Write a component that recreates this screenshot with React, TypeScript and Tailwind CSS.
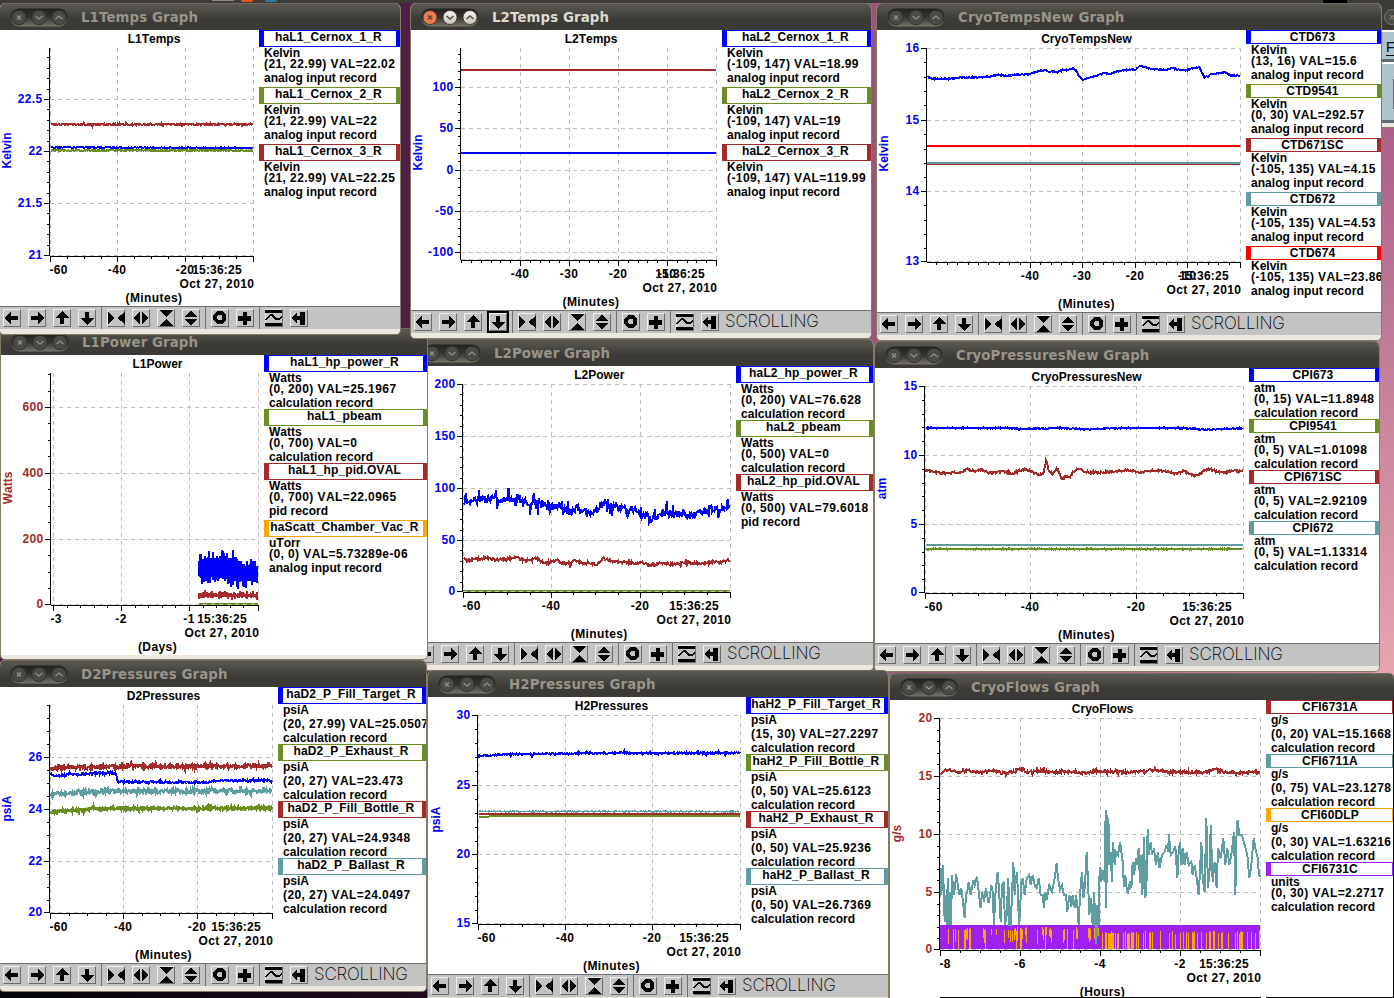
import type { ReactNode } from 'react'
import clsx from 'clsx'

const BLUE = '#0000ff'
const OLIVE = '#6b8e23'
const BROWN = '#a52a2a'
const CADET = '#5f9ea0'
const ORANGE = '#ffa500'
const PURPLE = '#a020f0'
const RED = '#ff0000'

type Point = [number, number]

type Trace = {
  color: string
  points: Point[]
  noise?: number
  spikes?: number
  width?: number
}

type Band = { color: string; x1: number; x2: number; top: Point[]; bottom: Point[]; jitter: number }

type Tick = { at: number; label?: string }

type Graph = {
  name: string
  active?: boolean
  left: number
  top: number
  width: number
  bodyHeight: number
  toolbar?: boolean
  status?: boolean
  // plot rectangle, screen coordinates
  plot: { x1: number; x2: number; y1: number; y2: number }
  xTicks: Tick[]
  yTicks: Tick[]
  xStep: number
  yStep: number
  yLabelRight: number
  axisColor: string
  yTitle: string
  yTitleAt: Point
  xTitle: string
  center: number
  traces: Trace[]
  bands?: Band[]
  flowBars?: boolean
  legendLeft: number
  legend: { color: string; name: string; units: string; value: string; record: string }[]
}

function random(seed: number) {
  let s = seed
  return () => {
    s = (s * 1103515245 + 12345) % 2147483648
    return s / 2147483648
  }
}

function interpolate(points: Point[], x: number) {
  for (let i = 1; i < points.length; i++) {
    if (x <= points[i][0]) {
      const [ax, ay] = points[i - 1]
      const [bx, by] = points[i]
      return ay + ((by - ay) * (x - ax)) / (bx - ax)
    }
  }
  return points[points.length - 1][1]
}

function tracePath(trace: Trace) {
  const { points, noise = 0, spikes = 0 } = trace
  if (!noise) return points.map((p) => p.join(',')).join(' ')
  const rand = random(Math.round(points[0][1] * 31 + points.length))
  const out: string[] = []
  for (let x = points[0][0]; x <= points[points.length - 1][0]; x += 0.7) {
    let y = interpolate(points, x) + (rand() - 0.5) * 2 * noise
    if (rand() < 0.12) y += (rand() - 0.5) * 2 * spikes
    out.push(`${x.toFixed(1)},${y.toFixed(1)}`)
  }
  return out.join(' ')
}

function bandPath(band: Band) {
  const rand = random(Math.round(band.x1 + band.top[0][1]))
  const out: string[] = []
  for (let x = band.x1; x <= band.x2; x += 1) {
    out.push(`${x},${(interpolate(band.top, x) - rand() * rand() * band.jitter).toFixed(1)}`)
    out.push(`${x},${(interpolate(band.bottom, x) + rand() * rand() * band.jitter).toFixed(1)}`)
  }
  return out.join(' ')
}

// points digitised at triple size, moved to screen coordinates
function digitised(ox: number, oy: number, k: number, flat: number[]): Point[] {
  const out: Point[] = []
  for (let i = 0; i < flat.length; i += 2) out.push([ox + flat[i] / k, oy + flat[i + 1] / 3])
  return out
}

const line = (x1: number, x2: number, y: number): Point[] => [[x1, y], [x2, y]]

const cernox = (prefix: string, units: string, rows: string[]) =>
  rows.map((value, i) => ({
    color: [BLUE, OLIVE, BROWN][i],
    name: `${prefix}_Cernox_${i + 1}_R`,
    units,
    value,
    record: 'analog input record',
  }))

const calc = 'calculation record'
const analog = 'analog input record'

const L1Temps: Graph = {
  name: 'L1Temps', left: -1, top: 3, width: 402, bodyHeight: 276, toolbar: true,
  plot: { x1: 50, x2: 253, y1: 48, y2: 256 },
  xTicks: [{ at: 50, label: '-60' }, { at: 117, label: '-40' }, { at: 185, label: '-20' }, { at: 253 }],
  yTicks: [{ at: 99, label: '22.5' }, { at: 151, label: '22' }, { at: 203, label: '21.5' }, { at: 255, label: '21' }],
  xStep: 17, yStep: 10.4, yLabelRight: 42.5, axisColor: BLUE, yTitle: 'Kelvin', yTitleAt: [11, 150.5],
  xTitle: '(Minutes)', center: 154,
  traces: [
    { color: OLIVE, points: line(51, 253, 150.4), noise: 0.6 },
    { color: BLUE, points: [[51, 147.3], [253, 148]], noise: 0.5 },
    { color: BROWN, points: line(51, 253, 124.5), noise: 0.7, spikes: 1.5 },
  ],
  legendLeft: 259,
  legend: cernox('haL1', 'Kelvin', ['(21, 22.99) VAL=22.02', '(21, 22.99) VAL=22', '(21, 22.99) VAL=22.25']),
}

const L2Temps: Graph = {
  name: 'L2Temps', active: true, left: 410, top: 3, width: 462, bodyHeight: 280, toolbar: true, status: true,
  plot: { x1: 461, x2: 716, y1: 48, y2: 260 },
  xTicks: [{ at: 520, label: '-40' }, { at: 569, label: '-30' }, { at: 618, label: '-20' }, { at: 667, label: '-10' }, { at: 716 }],
  yTicks: [{ at: 87, label: '100' }, { at: 128, label: '50' }, { at: 170, label: '0' }, { at: 211, label: '-50' }, { at: 252, label: '-100' }],
  xStep: 9.8, yStep: 8.25, yLabelRight: 453.5, axisColor: BLUE, yTitle: 'Kelvin', yTitleAt: [422, 152.5],
  xTitle: '(Minutes)', center: 591,
  traces: [
    { color: BROWN, points: line(461, 716, 70) },
    { color: BLUE, points: line(461, 716, 153) },
  ],
  legendLeft: 722,
  legend: cernox('haL2', 'Kelvin', ['(-109, 147) VAL=18.99', '(-109, 147) VAL=19', '(-109, 147) VAL=119.99']),
}

const CryoTemps: Graph = {
  name: 'CryoTempsNew', left: 876, top: 3, width: 506, bodyHeight: 282, toolbar: true, status: true,
  plot: { x1: 927, x2: 1240, y1: 48, y2: 262 },
  xTicks: [{ at: 1030, label: '-40' }, { at: 1082, label: '-30' }, { at: 1135, label: '-20' }, { at: 1187, label: '-10' }, { at: 1240 }],
  yTicks: [{ at: 48, label: '16' }, { at: 120, label: '15' }, { at: 191, label: '14' }, { at: 261, label: '13' }],
  xStep: 10.4, yStep: 14.3, yLabelRight: 919.5, axisColor: BLUE, yTitle: 'Kelvin', yTitleAt: [888, 153.5],
  xTitle: '(Minutes)', center: 1086.5,
  traces: [
    {
      color: BLUE, noise: 0.6,
      points: digitised(870, 0, 2.992, [
        172, 231, 190, 236, 210, 237, 240, 236, 270, 233, 300, 232, 350, 231, 385, 224, 410, 228, 425, 225, 450, 223,
        475, 223, 500, 215, 525, 210, 535, 217, 545, 213, 560, 218, 575, 211, 590, 210, 605, 206, 615, 209, 625, 228,
        637, 240, 650, 235, 665, 230, 680, 227, 700, 218, 720, 222, 740, 214, 770, 210, 795, 208, 805, 200, 820, 201,
        840, 206, 860, 209, 885, 210, 905, 205, 930, 211, 950, 210, 965, 205, 985, 201, 992, 215, 1000, 232, 1010, 230,
        1020, 222, 1040, 220, 1060, 217, 1080, 226, 1100, 227, 1108, 228,
      ]),
    },
    { color: RED, points: line(927, 1240, 146) },
    { color: BROWN, points: line(927, 1240, 164), width: 1.5 },
    { color: CADET, points: line(927, 1240, 163) },
  ],
  legendLeft: 1246,
  legend: [
    { color: BLUE, name: 'CTD673', units: 'Kelvin', value: '(13, 16) VAL=15.6', record: analog },
    { color: OLIVE, name: 'CTD9541', units: 'Kelvin', value: '(0, 30) VAL=292.57', record: analog },
    { color: BROWN, name: 'CTD671SC', units: 'Kelvin', value: '(-105, 135) VAL=4.15', record: analog },
    { color: CADET, name: 'CTD672', units: 'Kelvin', value: '(-105, 135) VAL=4.53', record: analog },
    { color: RED, name: 'CTD674', units: 'Kelvin', value: '(-105, 135) VAL=23.86', record: analog },
  ],
}

const L1Power: Graph = {
  name: 'L1Power', left: 0, top: 328, width: 428, bodyHeight: 300,
  plot: { x1: 51, x2: 258, y1: 373, y2: 605 },
  xTicks: [{ at: 53, label: '-3' }, { at: 121, label: '-2' }, { at: 189, label: '-1' }, { at: 258 }],
  yTicks: [{ at: 407, label: '600' }, { at: 473, label: '400' }, { at: 539, label: '200' }, { at: 604, label: '0' }],
  xStep: 13.6, yStep: 16.45, yLabelRight: 43.5, axisColor: BROWN, yTitle: 'Watts', yTitleAt: [12, 488],
  xTitle: '(Days)', center: 157.5,
  traces: [{ color: OLIVE, points: line(199, 258, 604), width: 3 }],
  bands: [
    {
      color: BLUE, x1: 199, x2: 257.5, jitter: 12,
      top: [[199, 563], [202, 560], [236, 560], [241, 567], [258, 567]],
      bottom: [[199, 576], [234, 577], [240, 581], [258, 580]],
    },
    { color: BROWN, x1: 199, x2: 257.5, jitter: 4, top: line(199, 258, 594), bottom: line(199, 258, 596.5) },
  ],
  legendLeft: 264,
  legend: [
    { color: BLUE, name: 'haL1_hp_power_R', units: 'Watts', value: '(0, 200) VAL=25.1967', record: calc },
    { color: OLIVE, name: 'haL1_pbeam', units: 'Watts', value: '(0, 700) VAL=0', record: calc },
    { color: BROWN, name: 'haL1_hp_pid.OVAL', units: 'Watts', value: '(0, 700) VAL=22.0965', record: 'pid record' },
    { color: ORANGE, name: 'haScatt_Chamber_Vac_R', units: 'uTorr', value: '(0, 0) VAL=5.73289e-06', record: analog },
  ],
}

const L2Power: Graph = {
  name: 'L2Power', left: 412, top: 339, width: 462, bodyHeight: 276, toolbar: true, status: true,
  plot: { x1: 463, x2: 730, y1: 384, y2: 592 },
  xTicks: [{ at: 463, label: '-60' }, { at: 551, label: '-40' }, { at: 640, label: '-20' }, { at: 730 }],
  yTicks: [{ at: 384, label: '200' }, { at: 436, label: '150' }, { at: 488, label: '100' }, { at: 540, label: '50' }, { at: 591, label: '0' }],
  xStep: 22.2, yStep: 10.4, yLabelRight: 455.5, axisColor: BLUE, yTitle: 'Watts', yTitleAt: [424, 488],
  xTitle: '(Minutes)', center: 599.3,
  traces: [
    { color: OLIVE, points: line(463, 730, 591), width: 2 },
    {
      color: BLUE, noise: 3.4, spikes: 13,
      points: digitised(420, 335, 3, [
        131, 500, 150, 500, 165, 495, 190, 495, 210, 492, 225, 488, 250, 498, 265, 497, 290, 490, 310, 500, 330, 508,
        350, 498, 365, 505, 385, 522, 400, 517, 430, 515, 445, 535, 460, 528, 470, 515, 485, 530, 510, 535, 530, 525,
        550, 505, 570, 508, 590, 520, 620, 520, 650, 527, 665, 545, 680, 540, 692, 562, 705, 545, 730, 535, 760, 540,
        790, 538, 820, 540, 850, 530, 870, 522, 900, 522, 930, 515,
      ]),
    },
    {
      color: BROWN, noise: 1.3, spikes: 2.5,
      points: digitised(420, 335, 3, [
        131, 672, 150, 675, 200, 668, 230, 675, 290, 668, 320, 680, 350, 670, 375, 685, 410, 675, 440, 688, 465, 677,
        490, 685, 530, 688, 550, 670, 570, 676, 600, 682, 630, 683, 670, 684, 695, 694, 720, 684, 760, 688, 800, 682,
        850, 686, 880, 680, 905, 682, 930, 673,
      ]),
    },
  ],
  legendLeft: 736,
  legend: [
    { color: BLUE, name: 'haL2_hp_power_R', units: 'Watts', value: '(0, 200) VAL=76.628', record: calc },
    { color: OLIVE, name: 'haL2_pbeam', units: 'Watts', value: '(0, 500) VAL=0', record: calc },
    { color: BROWN, name: 'haL2_hp_pid.OVAL', units: 'Watts', value: '(0, 500) VAL=79.6018', record: 'pid record' },
  ],
}

const CryoPressures: Graph = {
  name: 'CryoPressuresNew', left: 874, top: 341, width: 506, bodyHeight: 275, toolbar: true, status: true,
  plot: { x1: 925, x2: 1243, y1: 386, y2: 593 },
  xTicks: [{ at: 925, label: '-60' }, { at: 1030, label: '-40' }, { at: 1136, label: '-20' }, { at: 1243 }],
  yTicks: [{ at: 386, label: '15' }, { at: 455, label: '10' }, { at: 524, label: '5' }, { at: 592, label: '0' }],
  xStep: 26.5, yStep: 13.8, yLabelRight: 917.5, axisColor: BLUE, yTitle: 'atm', yTitleAt: [886, 488.5],
  xTitle: '(Minutes)', center: 1086.5,
  traces: [
    { color: BLUE, points: [[926, 428], [1010, 428], [1018, 429], [1060, 428], [1085, 429.3], [1120, 428], [1185, 428], [1205, 429.5], [1243, 428.3]], noise: 0.6 },
    {
      color: BROWN, noise: 1.1,
      points: digitised(868, 335, 2.981, [
        172, 405, 200, 411, 230, 415, 270, 412, 295, 403, 320, 409, 340, 405, 370, 416, 400, 408, 430, 416, 465, 402,
        490, 410, 510, 420, 523, 418, 531, 376, 540, 408, 550, 417, 563, 402, 570, 412, 578, 432, 590, 424, 600, 428,
        612, 410, 625, 402, 650, 411, 690, 413, 730, 410, 780, 405, 810, 413, 850, 406, 890, 409, 915, 416, 940, 408,
        975, 424, 1000, 410, 1018, 402, 1055, 414, 1085, 407, 1118, 407,
      ]),
    },
    { color: CADET, points: line(926, 1243, 545) },
    { color: OLIVE, points: line(926, 1243, 549), noise: 0.6 },
  ],
  legendLeft: 1249,
  legend: [
    { color: BLUE, name: 'CPI673', units: 'atm', value: '(0, 15) VAL=11.8948', record: calc },
    { color: OLIVE, name: 'CPI9541', units: 'atm', value: '(0, 5) VAL=1.01098', record: calc },
    { color: BROWN, name: 'CPI671SC', units: 'atm', value: '(0, 5) VAL=2.92109', record: calc },
    { color: CADET, name: 'CPI672', units: 'atm', value: '(0, 5) VAL=1.13314', record: calc },
  ],
}

const D2Pressures: Graph = {
  name: 'D2Pressures', left: -1, top: 660, width: 428, bodyHeight: 276, toolbar: true, status: true,
  plot: { x1: 50, x2: 272, y1: 705, y2: 913 },
  xTicks: [{ at: 50, label: '-60' }, { at: 123, label: '-40' }, { at: 197, label: '-20' }, { at: 272 }],
  yTicks: [{ at: 757, label: '26' }, { at: 809, label: '24' }, { at: 861, label: '22' }, { at: 912, label: '20' }],
  xStep: 18.5, yStep: 12.95, yLabelRight: 42.5, axisColor: BLUE, yTitle: 'psiA', yTitleAt: [11, 808.5],
  xTitle: '(Minutes)', center: 163.5,
  traces: [
    { color: OLIVE, noise: 1.4, spikes: 2.5, width: 2.5, points: digitised(0, 655, 3, [152, 470, 200, 467, 300, 462, 400, 460, 816, 459]) },
    { color: CADET, noise: 2, spikes: 3, width: 2.5, points: digitised(0, 655, 3, [152, 420, 200, 415, 250, 412, 330, 409, 816, 408]) },
    { color: BLUE, noise: 1.1, spikes: 1.5, points: digitised(0, 655, 3, [152, 361, 200, 362, 205, 358, 345, 353, 348, 355, 352, 380, 400, 380, 600, 382, 690, 377, 750, 376, 816, 377]) },
    { color: BROWN, noise: 1.6, spikes: 3, width: 2.5, points: digitised(0, 655, 3, [152, 341, 200, 338, 300, 335, 816, 333]) },
  ],
  legendLeft: 278,
  legend: [
    { color: BLUE, name: 'haD2_P_Fill_Target_R', units: 'psiA', value: '(20, 27.99) VAL=25.0507', record: calc },
    { color: OLIVE, name: 'haD2_P_Exhaust_R', units: 'psiA', value: '(20, 27) VAL=23.473', record: calc },
    { color: BROWN, name: 'haD2_P_Fill_Bottle_R', units: 'psiA', value: '(20, 27) VAL=24.9348', record: calc },
    { color: CADET, name: 'haD2_P_Ballast_R', units: 'psiA', value: '(20, 27) VAL=24.0497', record: calc },
  ],
}

const H2Pressures: Graph = {
  name: 'H2Pressures', left: 427, top: 670, width: 462, bodyHeight: 277, toolbar: true, status: true,
  plot: { x1: 478, x2: 740, y1: 715, y2: 924 },
  xTicks: [{ at: 478, label: '-60' }, { at: 565, label: '-40' }, { at: 652, label: '-20' }, { at: 740 }],
  yTicks: [{ at: 715, label: '30' }, { at: 785, label: '25' }, { at: 854, label: '20' }, { at: 923, label: '15' }],
  xStep: 21.8, yStep: 13.9, yLabelRight: 470.5, axisColor: BLUE, yTitle: 'psiA', yTitleAt: [440, 819.5],
  xTitle: '(Minutes)', center: 611.5,
  traces: [
    { color: BLUE, noise: 0.8, spikes: 2, points: digitised(420, 665, 3, [176, 272, 215, 272, 240, 268, 330, 267, 430, 266, 600, 264, 700, 265, 962, 264]) },
    { color: BROWN, points: line(479, 740, 814), width: 2 },
    { color: OLIVE, points: [[479, 817], [500, 816], [740, 816]], width: 2 },
    { color: CADET, points: line(479, 740, 811.5), noise: 0.6, width: 1.5 },
  ],
  legendLeft: 746,
  legend: [
    { color: BLUE, name: 'haH2_P_Fill_Target_R', units: 'psiA', value: '(15, 30) VAL=27.2297', record: calc },
    { color: OLIVE, name: 'haH2_P_Fill_Bottle_R', units: 'psiA', value: '(0, 50) VAL=25.6123', record: calc },
    { color: BROWN, name: 'haH2_P_Exhaust_R', units: 'psiA', value: '(0, 50) VAL=25.9236', record: calc },
    { color: CADET, name: 'haH2_P_Ballast_R', units: 'psiA', value: '(0, 50) VAL=26.7369', record: calc },
  ],
}

const CryoFlows: Graph = {
  name: 'CryoFlows', left: 889, top: 673, width: 506, bodyHeight: 298,
  plot: { x1: 940, x2: 1260, y1: 718, y2: 950 },
  xTicks: [{ at: 940, label: '-8' }, { at: 1020, label: '-6' }, { at: 1100, label: '-4' }, { at: 1180, label: '-2' }, { at: 1260 }],
  yTicks: [{ at: 718, label: '20' }, { at: 776, label: '15' }, { at: 834, label: '10' }, { at: 892, label: '5' }, { at: 949, label: '0' }],
  xStep: 20, yStep: 11.55, yLabelRight: 932.5, axisColor: BROWN, yTitle: 'g/s', yTitleAt: [901, 833.5],
  xTitle: '(Hours)', center: 1102.5,
  flowBars: true,
  traces: [
    {
      color: BROWN, noise: 1.4, spikes: 3,
      points: digitised(880, 665, 3, [
        182, 325, 205, 312, 230, 322, 255, 316, 300, 323, 345, 318, 370, 325, 400, 320, 420, 312, 440, 320, 480, 318,
        520, 322, 580, 320, 610, 325, 650, 317, 700, 321, 780, 321, 825, 314, 870, 321, 980, 322, 998, 312, 1020, 318,
        1070, 323, 1141, 322,
      ]),
    },
    {
      color: CADET,
      points: digitised(880, 665, 3, [
        182, 610, 184, 690, 188, 600, 192, 690, 194, 770, 198, 690, 201, 780, 203, 640, 207, 780, 210, 680, 213, 780,
        216, 630, 221, 690, 226, 660, 228, 628, 232, 650, 238, 690, 244, 670, 250, 720, 254, 760, 258, 690, 262, 680,
        266, 650, 272, 690, 280, 645, 284, 660, 291, 635, 296, 680, 302, 730, 306, 680, 312, 710, 318, 670, 326, 715,
        334, 660, 338, 680, 342, 780, 346, 690, 353, 620, 358, 690, 362, 770, 366, 660, 371, 650, 375, 780, 380, 750,
        385, 640, 388, 780, 392, 780, 396, 690, 400, 592, 404, 690, 408, 640, 411, 620, 414, 690, 417, 780, 420, 740,
        424, 650, 428, 640, 434, 690, 440, 640, 448, 630, 452, 660, 458, 630, 464, 660, 470, 670, 476, 640, 482, 690,
        488, 690, 492, 728, 496, 680, 500, 705, 508, 660, 516, 680, 524, 640, 530, 595, 534, 640, 540, 675, 546, 660,
        552, 690, 558, 690, 562, 740, 568, 690, 574, 725, 578, 690, 584, 730, 588, 690, 592, 720, 596, 780, 600, 690,
        606, 620, 610, 700, 615, 660, 620, 560, 624, 650, 628, 750, 632, 700, 638, 780, 642, 680, 646, 770, 649, 838,
        652, 720, 656, 780, 657, 650, 661, 605, 664, 650, 668, 615, 674, 650, 677, 436, 679, 730, 681, 450, 686, 480,
        688, 600, 692, 560, 696, 650, 699, 530, 704, 600, 708, 560, 714, 570, 720, 530, 724, 560, 728, 590, 732, 665,
        736, 630, 740, 670, 744, 685, 750, 650, 754, 670, 758, 590, 762, 630, 768, 580, 772, 600, 776, 550, 780, 655,
        783, 570, 787, 690, 792, 515, 796, 700, 800, 640, 803, 492, 806, 570, 812, 530, 816, 570, 822, 550, 828, 600,
        834, 560, 838, 610, 846, 570, 854, 560, 860, 540, 864, 560, 867, 508, 872, 570, 880, 560, 886, 545, 892, 640,
        896, 560, 900, 530, 905, 600, 909, 550, 914, 600, 920, 560, 926, 600, 934, 590, 938, 630, 944, 600, 950, 640,
        956, 690, 960, 620, 964, 530, 968, 640, 974, 680, 979, 460, 984, 670, 990, 600, 992, 480, 998, 650, 1004, 590,
        1010, 670, 1014, 550, 1022, 580, 1030, 520, 1036, 600, 1042, 550, 1048, 600, 1054, 570, 1062, 500, 1066, 690,
        1070, 490, 1073, 465, 1078, 510, 1086, 510, 1094, 540, 1102, 570, 1108, 640, 1114, 600, 1121, 520, 1128, 560,
        1132, 570, 1137, 630, 1141, 635,
      ]),
    },
  ],
  legendLeft: 1266,
  legend: [
    { color: BROWN, name: 'CFI6731A', units: 'g/s', value: '(0, 20) VAL=15.1668', record: calc },
    { color: CADET, name: 'CFI6711A', units: 'g/s', value: '(0, 75) VAL=23.1278', record: calc },
    { color: ORANGE, name: 'CFI60DLP', units: 'g/s', value: '(0, 30) VAL=1.63216', record: calc },
    { color: PURPLE, name: 'CFI6731C', units: 'units', value: '(0, 30) VAL=2.2717', record: calc },
  ],
}

// back to front
const graphs = [L2Power, L1Power, L1Temps, L2Temps, CryoPressures, CryoTemps, H2Pressures, D2Pressures, CryoFlows]

function minorTicks(from: number, to: number, majors: Tick[], step: number) {
  const out: number[] = []
  for (let v = majors[0].at; v > from; v -= step) out.push(v)
  majors.forEach((m, i) => {
    const end = i + 1 < majors.length ? majors[i + 1].at - step / 2 : to
    for (let v = m.at + step; v < end; v += step) out.push(v)
  })
  return out
}

function FlowBars() {
  const rand = random(77)
  const bars: ReactNode[] = []
  for (let x = 941; x < 1260; x++) {
    const right = x > 1100
    if (rand() < (right ? 0.36 : 0.3)) {
      const y1 = right ? 931 + rand() * 3 : 927 + rand() * 4
      const y2 = right || rand() < 0.25 ? 949 : 934 + rand() * 10
      bars.push(<rect key={x} x={x} y={Math.round(y1)} width={1} height={Math.round(y2 - y1)} fill={ORANGE} />)
    }
  }
  return (
    <g>
      <rect x={940} y={925} width={320} height={24} fill={PURPLE} />
      {bars}
    </g>
  )
}

function Chart({ graph }: { graph: Graph }) {
  const { plot, xTicks, yTicks } = graph
  const x0 = graph.left + 1
  const y0 = graph.top + 27
  const w = graph.legendLeft - x0
  const dateX = plot.x2 - 36
  const numeric = 'tracking-[0.35px]'

  return (
    <svg
      width={w}
      height={graph.bodyHeight}
      viewBox={`${x0} ${y0} ${w} ${graph.bodyHeight}`}
      className="block shrink-0 text-[12px] font-bold [font-kerning:none]"
    >
      <g shapeRendering="crispEdges" stroke="#bebebe" strokeDasharray="4 4">
        {xTicks.map((t) => (
          <line key={t.at} x1={t.at + 0.5} x2={t.at + 0.5} y1={plot.y1} y2={plot.y2} />
        ))}
        {yTicks.map((t) => (
          <line key={t.at} x1={plot.x1} x2={plot.x2} y1={t.at + 0.5} y2={t.at + 0.5} />
        ))}
      </g>
      {graph.flowBars && <FlowBars />}
      <g fill="none" shapeRendering="crispEdges">
        {graph.bands?.map((b) => (
          <polyline key={b.color} points={bandPath(b)} stroke={b.color} strokeWidth={1.4} />
        ))}
        {graph.traces.map((t, i) => (
          <polyline key={i} points={tracePath(t)} stroke={t.color} strokeWidth={t.width ?? 2} />
        ))}
      </g>
      <line x1={plot.x1} x2={plot.x2} y1={plot.y2 - 0.5} y2={plot.y2 - 0.5} stroke="#bebebe" strokeDasharray="4 4" />

      {/* axes */}
      <g shapeRendering="crispEdges" stroke="#000">
        <line x1={plot.x1 - 0.5} x2={plot.x1 - 0.5} y1={plot.y1} y2={plot.y2} />
        <line x1={plot.x1} x2={plot.x2 + 1} y1={plot.y2 + 0.5} y2={plot.y2 + 0.5} />
        {xTicks.map((t) => (
          <line key={t.at} x1={t.at + 0.5} x2={t.at + 0.5} y1={plot.y2} y2={plot.y2 + 6} />
        ))}
        {yTicks.map((t) => (
          <line key={t.at} x1={plot.x1 - 6} x2={plot.x1} y1={t.at + 0.5} y2={t.at + 0.5} />
        ))}
        {minorTicks(plot.x1, plot.x2, xTicks, graph.xStep).map((v) => (
          <line key={v} x1={Math.round(v) + 0.5} x2={Math.round(v) + 0.5} y1={plot.y2} y2={plot.y2 + 3} />
        ))}
        {minorTicks(plot.y1, plot.y2, yTicks, graph.yStep).map((v) => (
          <line key={v} x1={plot.x1 - 3} x2={plot.x1} y1={Math.round(v) + 0.5} y2={Math.round(v) + 0.5} />
        ))}
      </g>

      {/* labels */}
      <g textAnchor="middle">
        <text x={graph.center} y={y0 + 13}>{graph.name}</text>
        {xTicks.map((t, i) =>
          t.label ? (
            <text
              key={t.at}
              x={i === 0 && t.at - plot.x1 < 5 ? plot.x1 - 0.5 : t.at}
              y={plot.y2 + 18}
              textAnchor={i === 0 && t.at - plot.x1 < 5 ? 'start' : 'middle'}
              className={numeric}
            >
              {t.label}
            </text>
          ) : null,
        )}
        <text x={dateX} y={plot.y2 + 18} className="tracking-[0.2px]">15:36:25</text>
        <text x={dateX} y={plot.y2 + 32} className="tracking-[0.4px]">Oct 27, 2010</text>
        <text x={graph.center} y={plot.y2 + 46} className="tracking-[0.4px]">{graph.xTitle}</text>
      </g>
      <g fill={graph.axisColor}>
        {yTicks.map((t) => (
          <text key={t.at} x={graph.yLabelRight} y={t.at + 4} textAnchor="end" className={numeric}>
            {t.label}
          </text>
        ))}
        <text textAnchor="middle" transform={`translate(${graph.yTitleAt[0]} ${graph.yTitleAt[1]}) rotate(-90)`}>
          {graph.yTitle}
        </text>
      </g>
    </svg>
  )
}

function Legend({ graph }: { graph: Graph }) {
  const clipped = graph.name === 'CryoFlows'
  return (
    <div className="min-w-0 flex-1 overflow-hidden text-[12px] leading-[12px] font-bold whitespace-nowrap [font-kerning:none]">
      {graph.legend.map((row) => (
        <div key={row.name}>
          <div
            className={clsx(
              'flex justify-center border-y border-l-[5px] pr-[3px]',
              clipped ? 'border-r' : 'border-r-4',
              row.name.includes('_') ? 'h-[17px]' : 'h-[14px]',
            )}
            style={{ borderColor: row.color }}
          >
            <span className="tracking-[0.14px]">{row.name}</span>
          </div>
          <div className="pl-[5px]">
            <div className={/[pg]/.test(row.units) ? 'h-[14px]' : 'h-[11px]'}>{row.units}</div>
            <div className="h-[14px] tracking-[0.42px]">{row.value}</div>
            <div className={clsx('tracking-[0.04px]', /[pg]/.test(row.record) ? 'h-[15px]' : 'h-[12px]')}>{row.record}</div>
          </div>
        </div>
      ))}
    </div>
  )
}

const icons = {
  left: 'M1 9 8 2.5v4.5h7v4H8v4.5z',
  right: 'M17 9 10 2.5v4.5h-7v4h7v4.5z',
  up: 'M9 2 2 9h5v6h4V9h5z',
  down: 'M9 16 2 9h5V3h4v6h5z',
  squeezeX: 'M1 3 8 9 1 15zM18 3 10 9l8 6z',
  expandX: 'M7.5 3v12L1 9zM10 3v12l6.500-6z',
  squeezeY: 'M2 1h14L9 8zM9 10l7 7H2z',
  expandY: 'M9 1.500 16 8H2zM2 10h14l-7 6.500z',
  ring: 'M6 2h5l4 4v5l-4 4H6l-4-4V6zM7 6 6 7v3l1 1h3l1-1V7l-1-1z',
  plus: 'M6.500 2.500h4.500v4h4v5h-4v4H6.500v-4h-4.500v-5h4.500z',
  wave: 'M0 1h17v3H0zM0 14h17v3H0zM0 10l5-5h2l5 4h2l3-3v2l-3 3h-3L6 7l-5 4H0z',
  end: 'M1 9 7 3v4h3V3h5v13h-5v-5H7v4z',
}

const groups: (keyof typeof icons)[][] = [
  ['left', 'right', 'up', 'down'],
  ['squeezeX', 'expandX', 'squeezeY', 'expandY'],
  ['ring', 'plus'],
  ['wave', 'end'],
]

function Toolbar({ graph }: { graph: Graph }) {
  return (
    <div className="flex h-[23px] border-t border-[#6e6e6e] bg-[#c3c3c3] pl-[3px]">
      {groups.map((group, g) => (
        <div key={g} className={clsx('flex shrink-0 gap-[7px] pt-[2px]', g > 0 && 'ml-[5px] border-l border-[#6e6e6e] pl-[5px]')}>
          {group.map((name) => (
            <span
              key={name}
              className={clsx(
                'relative h-[18px] w-[18px] border border-t-[#f0f0f0] border-r-[#6a6a6a] border-b-[#6a6a6a] border-l-[#f0f0f0]',
                graph.active && name === 'down' && 'outline-2 outline-black',
              )}
            >
              <svg width="18" height="18" viewBox="0 0 18 18" className="absolute -top-px -left-px" fillRule="evenodd" shapeRendering="crispEdges">
                <path d={icons[name]} />
              </svg>
            </span>
          ))}
        </div>
      ))}
      {graph.status && (
        <span className="ml-[6px] font-[Inter] text-[17px] leading-[21px] font-extralight tracking-[-0.2px]">SCROLLING</span>
      )}
    </div>
  )
}

function WindowButtons({ active }: { active?: boolean }) {
  const marks = ['M-2 -2 2 2M2 -2-2 2', 'M-3.5 -1.5 0 1.5 3.5 -1.5', 'M-3.5 1.5 0 -1.5 3.5 1.5']
  return (
    <svg width="58" height="19" viewBox="0 0 58 19" className="ml-[10px] shrink-0">
      <defs>
        <linearGradient id="well" x1="0" y1="0" x2="0" y2="1">
          <stop offset="0" stopColor="#22211e" />
          <stop offset="0.5" stopColor="#35342f" />
          <stop offset="1" stopColor="#77756b" />
        </linearGradient>
        <linearGradient id="light" x1="0" y1="0" x2="0" y2="1">
          <stop offset="0" stopColor="#f6f5f2" />
          <stop offset="1" stopColor="#c4c0b6" />
        </linearGradient>
      </defs>
      <rect x="0" y="0.5" width="58" height="18" rx="9" fill="url(#well)" />
      {marks.map((d, i) => (
        <g key={d} transform={`translate(${9 + i * 20} 9.5)`}>
          <circle
            r={active ? 7 : 7.3}
            fill={active ? (i === 0 ? '#f07b50' : 'url(#light)') : '#4b4a45'}
            stroke={active ? '#3a2a20' : '#2a2926'}
            strokeWidth="0.8"
          />
          <path d={d} fill="none" stroke={active ? '#4f4840' : '#96948b'} strokeWidth={active ? 1.5 : 1.2} />
        </g>
      ))}
    </svg>
  )
}

function GraphWindow({ graph }: { graph: Graph }) {
  return (
    <section
      className="absolute overflow-hidden rounded-t-[6px] rounded-b-[5px] border-x border-b border-[#857a65] bg-[#ece7df]"
      style={{ left: graph.left, top: graph.top, width: graph.width }}
    >
      <header className="flex h-[27px] items-center border-t border-[#6f6a5e] bg-linear-to-b from-[#5a5951] to-[#3b3a36] to-60%">
        <WindowButtons active={graph.active} />
        <h2
          className={clsx(
            'ml-[13px] pt-[2px] font-["DejaVu_Sans"] text-[13.33px] leading-[24px] font-bold tracking-[0.1px] whitespace-nowrap',
            graph.active ? 'text-[#dfdbd2]' : 'text-[#99958a]',
          )}
        >
          {graph.name} Graph
        </h2>
      </header>
      <div className={clsx('flex bg-white', graph.name === 'CryoFlows' && 'border-r border-black')}>
        <Chart graph={graph} />
        <Legend graph={graph} />
      </div>
      {graph.toolbar && <Toolbar graph={graph} />}
      <div className={graph.toolbar ? 'h-[5px]' : 'h-[4px]'} />
    </section>
  )
}

// strip of another application behind the right hand windows
function BackgroundWindow() {
  return (
    <div className="absolute top-[3px] left-[1370px] w-[60px] border-b border-[#857a65] bg-[#aec2cb] pl-[12px]">
      <div className="-ml-[12px] h-[27px] bg-[#3b3a36] pt-[6px] pl-[14px]">
        <div className="flex h-[16px] w-[16px] items-center justify-center rounded-full border border-[#77756b] bg-[#4b4a45] text-[10px] text-[#96948b]">
          ×
        </div>
      </div>
      <div className="h-[29px] border-t-2 border-white pt-[7px] pl-[4px] text-[14px] leading-[16px]">
        <span className="border-b border-black">F</span>
      </div>
      <div className="h-[5px] border-b-2 border-white bg-[#5b6a73]" />
      <div className="h-[56px] pt-[15px] pl-[11px]">
        <div className="h-[30px] border-l border-[#5b6a73]" />
      </div>
      <div className="h-[3px] bg-[#5b6a73]" />
      <div className="-ml-[12px] h-[4px] bg-[#ece7df]" />
    </div>
  )
}

export default function App() {
  return (
    <main className='relative h-[998px] w-[1394px] overflow-hidden bg-linear-to-r from-[#4d1f43] from-30% via-[#99577b] via-63% to-[#d98aa6] font-["Liberation_Sans",Arial,sans-serif] text-black'>
      <div className="absolute top-[100px] right-0 h-[600px] w-[20px] bg-linear-to-b from-[#a85d86] to-[#eaa8b2]" />
      <div className="absolute bottom-0 left-0 h-[12px] w-[430px] bg-linear-to-r from-[#050308] to-[#1f0a1e]" />
      <div className="flex h-[3px] bg-[#3c3b37]">
        <div className="ml-[212px] h-px w-[22px] bg-[#8c8a84]" />
        <div className="ml-[7px] h-[2px] w-[12px] rounded-b-full bg-[#e9561d]" />
        <div className="ml-[12px] h-[2px] w-[12px] rounded-b-full bg-[#2f78a8]" />
        <div className="ml-[1046px] h-[3px] w-[24px] bg-black" />
      </div>
      <BackgroundWindow />
      {graphs.map((graph) => (
        <GraphWindow key={graph.name} graph={graph} />
      ))}
      {/* upper edge of the clipped toolbar row */}
      <div className="absolute top-[997px] left-[940px] flex gap-[5px]">
        <div className="h-px w-[321px] bg-black" />
        <div className="h-px w-[128px] bg-black" />
      </div>
    </main>
  )
}
